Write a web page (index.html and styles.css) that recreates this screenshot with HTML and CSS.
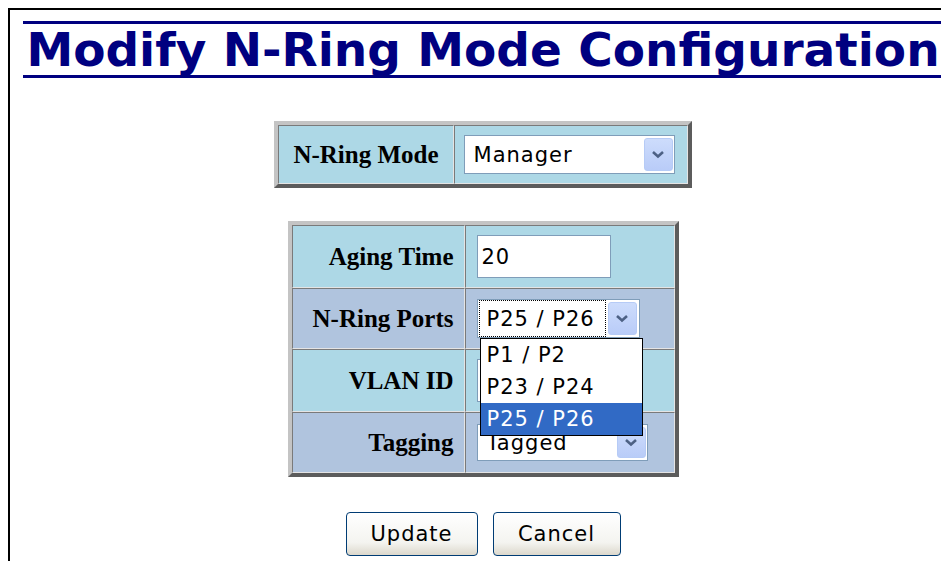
FILE: index.html
```html
<!DOCTYPE html>
<html lang="en">
<head>
    <meta charset="UTF-8">
    <meta name="viewport" content="width=device-width, initial-scale=1.0">
    <title>Modify N-Ring Mode Configuration</title>
    <link rel="stylesheet" href="styles.css">
</head>
<body>
    <div class="frame">
        <h1 class="title">Modify N-Ring Mode Configuration</h1>

        <table class="config mode-table">
            <tr class="blue">
                <th>N-Ring Mode</th>
                <td>
                    <div class="select mode-select">
                        <span class="value">Manager</span>
                        <span class="arrow"><svg width="14" height="9" viewBox="0 0 14 9"><path d="M2 2 L7 6.5 L12 2" fill="none" stroke="#4d6185" stroke-width="2.6"/></svg></span>
                    </div>
                </td>
            </tr>
        </table>

        <table class="config params-table">
            <tr class="blue">
                <th>Aging Time</th>
                <td><input type="text" class="text-input" value="20"></td>
            </tr>
            <tr class="steel">
                <th>N-Ring Ports</th>
                <td>
                    <div class="select ports-select">
                        <span class="value focused">P25 / P26</span>
                        <span class="arrow"><svg width="14" height="9" viewBox="0 0 14 9"><path d="M2 2 L7 6.5 L12 2" fill="none" stroke="#4d6185" stroke-width="2.6"/></svg></span>
                        <!-- open dropdown list -->
                        <ul class="dropdown">
                            <li>P1 / P2</li>
                            <li>P23 / P24</li>
                            <li class="selected">P25 / P26</li>
                        </ul>
                    </div>
                </td>
            </tr>
            <tr class="blue">
                <th>VLAN ID</th>
                <td><input type="text" class="text-input" value=""></td>
            </tr>
            <tr class="steel">
                <th>Tagging</th>
                <td>
                    <div class="select tag-select">
                        <span class="value">Tagged</span>
                        <span class="arrow"><svg width="14" height="9" viewBox="0 0 14 9"><path d="M2 2 L7 6.5 L12 2" fill="none" stroke="#4d6185" stroke-width="2.6"/></svg></span>
                    </div>
                </td>
            </tr>
        </table>

        <div class="buttons">
            <button type="button" class="btn update">Update</button>
            <button type="button" class="btn cancel">Cancel</button>
        </div>
    </div>
</body>
</html>
```

FILE: styles.css
```css
body {
    margin: 8px;
    overflow: hidden;
    background: #fff;
}

.frame {
    width: 946px;
    min-height: 540px;
    border-top: 2px solid #000;
    border-left: 2px solid #000;
    padding-top: 11px;
}

.title {
    margin: 0 13px;
    padding-top: 1px;
    border-top: 3px solid #000080;
    border-bottom: 3px solid #000080;
    font-family: "DejaVu Sans", Verdana, sans-serif;
    font-weight: bold;
    font-size: 47px;
    line-height: 50px;
    color: #000080;
    text-align: center;
    white-space: nowrap;
}

/* 3D bordered tables */
.config {
    margin: 43px auto 0;
    border-collapse: separate;
    border-spacing: 0;
    border: 4px solid;
    border-color: #c4c4c4 #5c5c5c #5c5c5c #c4c4c4;
}

.config th,
.config td {
    border: 1px solid;
    border-color: #7a7a7a #e4e4e4 #e4e4e4 #7a7a7a;
    vertical-align: middle;
}

.config th {
    font-family: "Liberation Serif", "Times New Roman", serif;
    font-weight: bold;
    font-size: 25px;
    color: #000;
    white-space: nowrap;
}

.blue th, .blue td {
    background: #add8e6;
}

.steel th, .steel td {
    background: #b0c4de;
}

.mode-table th {
    width: 145px;
    height: 57px;
    padding: 0 14px;
    text-align: center;
}

.mode-table td {
    width: 222px;
    padding: 0 1px 0 9px;
}

.params-table {
    margin-top: 33px;
}

.params-table th {
    width: 161px;
    padding: 0 10px 0 0;
    text-align: right;
}

.params-table td {
    width: 197px;
    padding: 0 0 0 11px;
}

.params-table .blue th,
.params-table .blue td {
    height: 61px;
}

.params-table .steel th,
.params-table .steel td {
    height: 59px;
}

/* form controls, XP look */
.text-input,
.select {
    font-family: "DejaVu Sans", Tahoma, sans-serif;
    font-size: 21px;
    letter-spacing: 1px;
    color: #000;
}

.text-input {
    display: block;
    box-sizing: border-box;
    width: 134px;
    height: 43px;
    margin: 0;
    padding: 0 4px;
    border: 1px solid #7f9db9;
    background: #fff;
    outline: none;
}

.select {
    position: relative;
    box-sizing: border-box;
    display: flex;
    align-items: center;
    height: 39px;
    border: 1px solid #7f9db9;
    background: #fff;
}

.select .value {
    flex: 1;
    padding-left: 9px;
    white-space: nowrap;
    overflow: hidden;
}

.select .arrow {
    display: flex;
    align-items: center;
    justify-content: center;
    width: 27px;
    align-self: stretch;
    margin: 2px 1px 2px 0;
    border: 1px solid #b6cbf6;
    border-radius: 3px;
    background: linear-gradient(#cddcfc, #b9ccf8);
}

.mode-select {
    width: 211px;
}

.ports-select {
    width: 163px;
}

.ports-select .value.focused {
    flex: none;
    width: 119px;
    margin-left: 1px;
    padding-left: 8px;
    align-self: stretch;
    display: flex;
    align-items: center;
    outline: 1px dotted #000;
    outline-offset: -1px;
    margin-right: 2px;
}

.tag-select {
    width: 171px;
    height: 37px;
}

.dropdown {
    position: absolute;
    left: 2px;
    top: 100%;
    z-index: 2;
    box-sizing: border-box;
    width: 163px;
    margin: 1px 0 0;
    padding: 0;
    list-style: none;
    border: 1px solid #000;
    background: #fff;
}

.dropdown li {
    height: 32px;
    line-height: 32px;
    padding-left: 6px;
    white-space: nowrap;
}

.dropdown li.selected {
    background: #316ac5;
    color: #fff;
}

.buttons {
    display: flex;
    justify-content: center;
    gap: 15px;
    margin-top: 35px;
}

.btn {
    height: 44px;
    padding: 0;
    border: 1px solid #003c74;
    border-radius: 4px;
    background: linear-gradient(#ffffff, #f4f4f0 70%, #dcd8cc);
    font-family: "DejaVu Sans", Tahoma, sans-serif;
    font-size: 21px;
    letter-spacing: 1px;
    color: #000;
}

.update {
    width: 132px;
}

.cancel {
    width: 128px;
}
```
